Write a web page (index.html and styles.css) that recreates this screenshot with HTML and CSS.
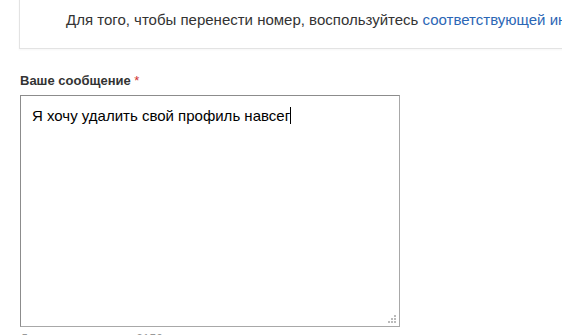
FILE: index.html
```html
<!DOCTYPE html>
<html lang="ru">
<head>
  <meta charset="UTF-8">
  <title>Ваше сообщение</title>
  <link rel="stylesheet" href="styles.css">
</head>
<body>

  <div class="notice">
    Для того, чтобы перенести номер, воспользуйтесь <a href="#">соответствующей инструкцией</a>.
  </div>

  <div class="field">
    <label class="field-label">Ваше сообщение <span class="req">*</span></label>
    <div class="textarea">
      Я хочу удалить свой профиль навсег<span class="caret"></span>
      <svg class="grip" width="9" height="9" viewBox="0 0 9 9">
        <rect x="6" y="0" width="2" height="2" fill="#bbb"/>
        <rect x="3" y="3" width="2" height="2" fill="#bbb"/>
        <rect x="6" y="3" width="2" height="2" fill="#bbb"/>
        <rect x="0" y="6" width="2" height="2" fill="#bbb"/>
        <rect x="3" y="6" width="2" height="2" fill="#bbb"/>
        <rect x="6" y="6" width="2" height="2" fill="#bbb"/>
      </svg>
    </div>
    <div class="counter">Доступно символов: 2150</div>
  </div>

</body>
</html>
```

FILE: styles.css
```css
body {
  margin: 0;
  font-family: "Liberation Sans", Arial, sans-serif;
  color: #333;
  background: #fff;
  overflow: hidden;
}

.notice {
  margin: -20px -20px 0 19px;
  padding: 31px 0 19px 46px;
  height: 18px;
  border: 1px solid #e3e3e3;
  border-top: none;
  font-size: 15px;
  line-height: 18px;
  white-space: nowrap;
  box-shadow: 0 1px 2px rgba(0, 0, 0, 0.04);
}

.notice a {
  color: #2b66b5;
  text-decoration: none;
}

.field {
  margin: 24px 0 0 20px;
}

.field-label {
  display: block;
  font-size: 13px;
  font-weight: bold;
  line-height: 16px;
  color: #333;
  margin-bottom: 6px;
}

.req {
  color: #d0312d;
  font-weight: normal;
}

.textarea {
  position: relative;
  width: 356px;
  height: 212px;
  padding: 10px 11px 8px 11px;
  border: 1px solid #8c8c8c;
  border-right-color: #a8a8a8;
  border-bottom-color: #a8a8a8;
  font-size: 15px;
  line-height: 20px;
  color: #000;
}

.caret {
  display: inline-block;
  width: 1px;
  height: 17px;
  background: #000;
  vertical-align: -3px;
}

.grip {
  position: absolute;
  right: 2px;
  bottom: 2px;
}

.counter {
  margin-top: 5px;
  font-size: 12px;
  line-height: 15px;
  color: #999;
}
```
